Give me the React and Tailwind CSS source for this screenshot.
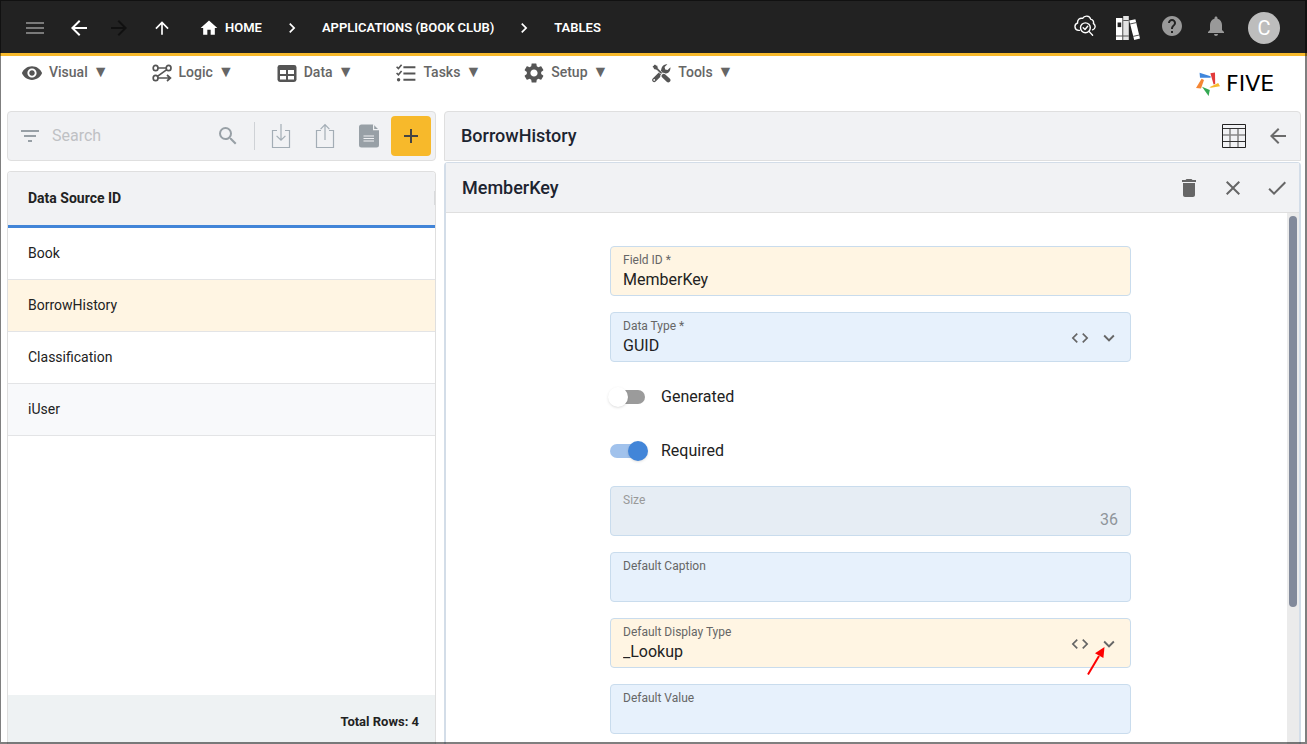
import React from "react";
import {
  MdMenu, MdArrowBack, MdArrowForward, MdArrowUpward, MdHome, MdChevronRight, MdHelp,
  MdNotifications, MdFilterList, MdSearch, MdAdd, MdDelete, MdClose, MdCheck,
  MdExpandMore, MdCode, MdSettings, MdVisibility,
} from "react-icons/md";

function CloudSearchIcon() {
  return (
    <svg width="22" height="22" viewBox="0 0 22 22" fill="none" stroke="#fff" strokeWidth="1.4" strokeLinecap="round" strokeLinejoin="round">
      <path d="M5.4 15.4H4.6A3.8 3.8 0 0 1 3.6 8 C3.2 4.4 6.2 2.6 8.6 3.4 C10.4.2 15.6.2 16.8 4.4 C19 4.6 20 6.6 19.4 8.4 C22 10.4 21.6 13.8 18.6 14.8" />
      <circle cx="11.4" cy="12.8" r="4.9" />
      <path d="M9.2 12.8l1.8 1.7 2.7-3.3M15 16.4l3.6 3.9" />
    </svg>
  );
}

function BooksIcon() {
  return (
    <svg width="24" height="24" viewBox="0 0 24 24">
      <path d="M0 2h6.4v22H0z" fill="#fff" />
      <path d="M7.2 0h5.6v24H7.2z" fill="#e4e4e4" />
      <path d="M13.2 4.6l6.2-1.4 4.6 19.4-5.8 1.4z" fill="#fff" />
      <path d="M1.6 6.5h3.6v4.6H1.6z" fill="#222" />
      <path d="M0 20h12.8M7.2 4.5h5.6M14 8l6.2-1.4M17.2 20.4l6-1.4" stroke="#555" strokeWidth="1" />
    </svg>
  );
}

function LogicIcon() {
  return (
    <svg width="20" height="20" viewBox="0 0 20 20" fill="none" stroke="#555" strokeWidth="1.7">
      <ellipse cx="3.6" cy="5" rx="2.4" ry="2.7" />
      <ellipse cx="16.6" cy="5" rx="2.4" ry="2.7" />
      <ellipse cx="3.6" cy="15" rx="2.4" ry="2.7" />
      <path d="M6 5h8.2M14.8 6.6L5.4 13.4M6 15h12M15 12l3.4 3-3.4 3" />
    </svg>
  );
}

function DataIcon() {
  return (
    <svg width="20" height="20" viewBox="0 0 20 20">
      <rect x="0.5" y="2" width="19" height="17" rx="2.4" fill="#555" />
      <path d="M3 7h6v4H3zM11 7h6v4h-6zM3 13h6v3.6H3zM11 13h6v3.6h-6z" fill="#fff" />
    </svg>
  );
}

function TasksIcon() {
  return (
    <svg width="20" height="20" viewBox="0 0 20 20" fill="none" stroke="#555">
      <path d="M7.4 4.3h12M7.4 10.5h12M7.4 16.8h12" strokeWidth="2" />
      <path d="M0.6 3.8l1.8 1.8 3.2-3.8M0.6 10l1.8 1.8 3.2-3.8" strokeWidth="1.6" />
      <circle cx="2.6" cy="16.8" r="1.7" fill="#555" stroke="none" />
    </svg>
  );
}

function ToolsIcon() {
  return (
    <svg width="20" height="20" viewBox="0 0 20 20">
      <path d="M3.2 17l8.6-8.4" stroke="#555" strokeWidth="4.2" strokeLinecap="round" />
      <path d="M10.4 9.4C9.4 4.8 12 .8 16.4 1.3L13.6 4l.6 2.4 2.4.6 2.8-2.8c.6 4.4-3.2 7.2-7.4 6.2z" fill="#555" />
      <path d="M1.4 3.6L3.8 1.2l3 1.8.4 2.4 4 4-1.6 1.6-4-4-2.4-.4z" fill="#555" stroke="#fff" strokeWidth="0.7" />
      <path d="M12.4 13l4.2 4.2" stroke="#fff" strokeWidth="6" strokeLinecap="round" />
      <path d="M12.8 13l4.4 4.2" stroke="#555" strokeWidth="4.4" strokeLinecap="round" />
      <circle cx="3.2" cy="16.9" r="0.9" fill="#fff" />
    </svg>
  );
}

function TransferIcon({ up }) {
  return (
    <svg width="20" height="26" viewBox="0 0 20 26" fill="none" stroke="#a3adb5" strokeWidth="1.2">
      <path d="M6 7.5H1.5v17h17v-17H14" />
      {up ? <path d="M10 17V2M5.6 6.2L10 1.6l4.4 4.6" /> : <path d="M10 1v16M5.6 12.8l4.4 4.4 4.4-4.4" />}
    </svg>
  );
}

function DocumentIcon() {
  return (
    <svg width="20" height="24" viewBox="0 0 20 24">
      <path d="M3 .5h11.4L20 6v15a2.5 2.5 0 0 1-2.5 2.5h-15A2.5 2.5 0 0 1 0 21V3A2.5 2.5 0 0 1 2.5.5z" fill="#98a0a6" />
      <path d="M14.6.2V5.6H20" fill="none" stroke="#f1f2f4" strokeWidth="1.2" />
      <path d="M4.5 12H15M4.5 14.5H15M4.5 17H15" stroke="#f1f2f4" strokeWidth="1.1" />
    </svg>
  );
}

function GridIcon() {
  return (
    <svg width="24" height="24" viewBox="0 0 24 24" fill="none">
      <path d="M1 11h22M8 5v18M16 5v18" stroke="#888" strokeWidth="1.6" />
      <path d="M1 4.5h22M1 17.5h22" stroke="#333" strokeWidth="1" />
      <path d="M.5.5h23v23H.5z" stroke="#222" strokeWidth="1" />
    </svg>
  );
}

function FiveMark() {
  return (
    <svg width="24" height="24" viewBox="0 0 24 24">
      <path d="M3.6.8l11 3.4v1.6H4z" fill="#3f86dc" />
      <path d="M14.4 1.2L19 .4 19.200 12l-1.600.6z" fill="#e23b3b" />
      <path d="M13.4 15.200L22.200 11 24 14.200 15 15.800z" fill="#f7b92b" />
      <path d="M6 14.800L13.800 18 12.600 24z" fill="#34a853" />
      <path d="M5.600 6.800L8 8 5 16.400 0 16z" fill="#f58634" />
    </svg>
  );
}

const menu = [
  { label: "Visual", icon: <MdVisibility size={22} /> },
  { label: "Logic", icon: <LogicIcon /> },
  { label: "Data", icon: <DataIcon /> },
  { label: "Tasks", icon: <TasksIcon /> },
  { label: "Setup", icon: <MdSettings size={24} /> },
  { label: "Tools", icon: <ToolsIcon /> },
];

const sources = ["Book", "BorrowHistory", "Classification", "iUser"];

function TopBar() {
  return (
    <header className="flex h-14 shrink-0 items-center justify-between border-b-[3px] border-[#f7b92b] bg-[#222] pl-[23px] pr-[27px] pt-0.5 text-white">
      <div className="flex items-center">
        <button aria-label="Menu" className="text-[#7a7a7a]"><MdMenu size={24} /></button>
        <button aria-label="Back" className="ml-5"><MdArrowBack size={24} /></button>
        <button aria-label="Forward" disabled className="ml-4 text-[#111]"><MdArrowForward size={24} /></button>
        <button aria-label="Up" className="ml-[21px]"><MdArrowUpward size={20} /></button>
        <nav aria-label="Breadcrumb" className="ml-[27px] flex items-center text-[13px] font-semibold leading-5">
          <a href="#home" className="flex items-center gap-1.5"><MdHome size={20} />HOME</a>
          <MdChevronRight size={20} className="mx-5" />
          <a href="#applications">APPLICATIONS (BOOK CLUB)</a>
          <MdChevronRight size={20} className="mx-5" />
          <a href="#tables">TABLES</a>
        </nav>
      </div>
      <div className="flex items-center gap-5">
        <button aria-label="Inspect" className="pb-1"><CloudSearchIcon /></button>
        <button aria-label="Library"><BooksIcon /></button>
        <button aria-label="Help" className="pb-1 text-[#999]"><MdHelp size={24} /></button>
        <button aria-label="Notifications" className="pb-1 text-[#999]"><MdNotifications size={24} /></button>
        <button aria-label="Account" className="h-8 w-8 rounded-full bg-[#bdbdbd] text-xl leading-8">C</button>
      </div>
    </header>
  );
}

function MenuBar() {
  return (
    <div className="flex h-[55px] shrink-0 items-start justify-between pl-[22px] pr-[23px]">
      <nav className="flex gap-[43px] pt-1.5 text-sm font-medium text-[#666]">
        {menu.map((m) => (
          <button key={m.label} className="flex h-5 items-center">
            <span className="flex w-5 justify-center pt-0.5 text-[#555] [&>svg]:shrink-0">{m.icon}</span>
            <span className="ml-[7px]">{m.label}</span>
            <span className="ml-[5px] text-base leading-5">▼</span>
          </button>
        ))}
      </nav>
      <div className="flex items-center gap-1.5 pt-4">
        <FiveMark />
        <span className="w-[58px] font-['DejaVu_Sans'] text-[22px] leading-6 text-black">FIVE</span>
      </div>
    </div>
  );
}

function Sidebar() {
  return (
    <aside className="flex w-[429px] shrink-0 flex-col gap-2.5">
      <div className="flex h-[50px] shrink-0 items-center rounded border border-[#dfdfdf] bg-[#f1f2f4] pl-2.5 pr-1">
        <button aria-label="Filter" className="text-[#98a0a6]"><MdFilterList size={24} /></button>
        <input aria-label="Search" placeholder="Search" className="ml-2.5 min-w-0 flex-1 bg-transparent text-base text-[#333] outline-none placeholder:text-[#bfc1c4]" />
        <button aria-label="Run search" className="text-[#98a0a6]"><MdSearch size={24} /></button>
        <span className="ml-3.5 h-7 w-px bg-[#cfd2d6]" />
        <button aria-label="Import" className="ml-4"><TransferIcon /></button>
        <button aria-label="Export" className="ml-6"><TransferIcon up /></button>
        <button aria-label="Document" className="ml-6"><DocumentIcon /></button>
        <button aria-label="Add" className="ml-3 flex h-10 w-10 items-center justify-center rounded bg-[#f7b92b] text-[#444]"><MdAdd size={24} /></button>
      </div>
      <div className="flex min-h-0 flex-1 flex-col justify-between overflow-hidden rounded-t border border-b-0 border-[#dfdfdf]">
        <table className="w-full border-separate border-spacing-0 text-left text-sm text-[#222]">
          <thead>
            <tr className="bg-[#f1f2f4]">
              <th scope="col" className="h-14 border-b-[3px] border-[#4285d8] pb-0.5 pl-5 pr-0 pt-0 font-bold">
                <div className="flex items-center justify-between">Data Source ID<span className="h-3.5 w-px bg-[#d8dadc]" /></div>
              </th>
            </tr>
          </thead>
          <tbody>
            {sources.map((s) => (
              <tr key={s} className="last:bg-[#f8f9fb] [&:nth-child(2)]:bg-[#fff5e3]">
                <td className="h-[52px] border-b border-[#e3e4e6] pb-0.5 pl-5 pr-0 pt-0">{s}</td>
              </tr>
            ))}
          </tbody>
        </table>
        <div className="flex h-[49px] shrink-0 items-center justify-end bg-[#eef2f3] pr-4 pt-1 text-[13px] font-bold text-[#222]">Total Rows: 4</div>
      </div>
    </aside>
  );
}

function Field({ id, label, value, tone = "bg-[#e7f1fc]", select, disabled, children }) {
  return (
    <div className={`relative flex h-[50px] flex-col rounded border border-[#c9dced] px-3 pt-[5px] ${tone} ${disabled ? "text-[#8f959a]" : "text-[#222]"}`}>
      <label htmlFor={id} className={`text-xs leading-4 ${disabled ? "text-[#999]" : "text-[#666]"}`}>{label}</label>
      {select ? (
        <>
          <select id={id} defaultValue={value} className="w-full appearance-none bg-transparent text-base leading-6 outline-none">
            <option>{value}</option>
          </select>
          <div className="absolute inset-y-0 right-2.5 flex items-center gap-2 pt-0.5 text-[#666]">
            <button type="button" aria-label={`Edit ${label} as code`}><MdCode size={20} /></button>
            <MdExpandMore size={22} className="pointer-events-none" />
          </div>
        </>
      ) : (
        <input id={id} defaultValue={value} disabled={disabled} className={`w-full bg-transparent text-base leading-6 outline-none ${disabled ? "text-right" : ""}`} />
      )}
      {children}
    </div>
  );
}

function Toggle({ label, checked }) {
  return (
    <label className="flex h-[38px] items-center gap-4 text-base text-[#222]">
      <span className="relative flex h-5 w-[35px] items-center">
        <input type="checkbox" role="switch" defaultChecked={checked} className="peer h-3.5 w-full appearance-none rounded-full bg-[#9b9b9b] checked:bg-[#a1c2ec]" />
        <span className="pointer-events-none absolute -left-0.5 top-0 h-5 w-5 rounded-full bg-white shadow peer-checked:left-[18px] peer-checked:bg-[#4285d8]" />
      </span>
      {label}
    </label>
  );
}

function Detail() {
  return (
    <main className="flex min-w-0 flex-1 flex-col gap-px">
      <div className="flex h-[50px] shrink-0 items-center justify-between rounded-t border border-[#dfdfdf] bg-[#f1f2f4] pl-4 pr-2.5">
        <h1 className="text-lg font-medium text-[#1d2430]">BorrowHistory</h1>
        <div className="flex items-center gap-5 text-[#6b6b6b]">
          <button aria-label="Table view"><GridIcon /></button>
          <button aria-label="Back to tables"><MdArrowBack size={24} /></button>
        </div>
      </div>
      <section className="flex min-h-0 flex-1 flex-col rounded-t border-x-2 border-t border-[#d3dde8]">
        <div className="flex h-[50px] shrink-0 items-center justify-between border-b border-[#dfdfdf] bg-[#f1f2f4] pl-4 pr-2.5">
          <h2 className="text-lg font-medium text-[#1d2430]">MemberKey</h2>
          <div className="flex items-center gap-5 text-[#666]">
            <button aria-label="Delete"><MdDelete size={24} /></button>
            <button aria-label="Cancel"><MdClose size={24} /></button>
            <button aria-label="Save"><MdCheck size={24} /></button>
          </div>
        </div>
        <div className="flex min-h-0 flex-1">
          <form className="min-w-0 flex-1 overflow-hidden pl-2 pt-[33px]">
            <div className="mx-auto flex max-w-[521px] flex-col gap-4">
              <Field id="field-id" label="Field ID *" value="MemberKey" tone="bg-[#fff5e3]" />
              <Field id="data-type" label="Data Type *" value="GUID" select />
              <Toggle label="Generated" />
              <Toggle label="Required" checked />
              <Field id="size" label="Size" value="36" tone="bg-[#e6edf4]" disabled />
              <Field id="caption" label="Default Caption" />
              <Field id="display-type" label="Default Display Type" value="_Lookup" tone="bg-[#fff5e3]" select>
                <svg className="pointer-events-none absolute -bottom-2 right-6" width="20" height="30" viewBox="0 0 20 30">
                  <path d="M2 29.5L13 11" stroke="#fe0000" strokeWidth="2" />
                  <path d="M18.5 2L9 8.2 17.4 13z" fill="#fe0000" />
                </svg>
              </Field>
              <Field id="default-value" label="Default Value" />
            </div>
          </form>
          <div aria-hidden="true" className="w-3 shrink-0 bg-[#ebebeb] px-0.5 pt-[3px]">
            <div className="h-[74%] rounded-full bg-[#828a9b]" />
          </div>
        </div>
      </section>
    </main>
  );
}

export default function App() {
  return (
    <div className="relative flex h-screen flex-col overflow-hidden bg-white font-['Roboto',sans-serif]">
      <TopBar />
      <MenuBar />
      <div className="flex min-h-0 flex-1 gap-2 pl-[7px] pr-1.5">
        <Sidebar />
        <Detail />
      </div>
      <div className="pointer-events-none absolute inset-0 border-b-2 border-l border-r-2 border-t border-black/50" />
    </div>
  );
}
